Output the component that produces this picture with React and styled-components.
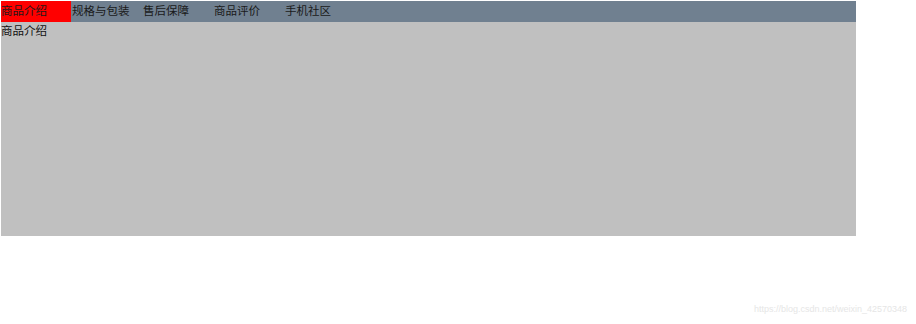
import React, { useState } from "react";
import styled, { createGlobalStyle } from "styled-components";

const GlobalStyle = createGlobalStyle`
  html, body {
    margin: 0;
    padding: 0;
    background: #fff;
  }
  body {
    padding: 1px 0 0 1px;
    font-family: "Liberation Sans", "Noto Sans CJK SC", sans-serif;
    font-size: 12px;
    color: #111;
  }
`;

const Page = styled.div`
  position: relative;
  width: 915px;
  height: 323px;
`;

const Box = styled.div`
  width: 855px;
`;

const TabBar = styled.ul`
  display: flex;
  margin: 0;
  padding: 0;
  list-style: none;
  height: 21px;
  background: #708090;
`;

const Tab = styled.li`
  width: ${(p) => (p.$first ? "70px" : "71px")};
  margin-right: ${(p) => (p.$first ? "1px" : "0")};
  height: 21px;
  line-height: 18px;
  font-family: "Noto Sans CJK SC", sans-serif;
  font-size: 11.5px;
  color: #1a1a1a;
  cursor: pointer;
  background: ${(p) => (p.$active ? "#ff0000" : "transparent")};
`;

const Panel = styled.div`
  height: 214px;
  background: #c0c0c0;
  font-family: "Noto Sans CJK SC", sans-serif;
  font-size: 11.5px;
  line-height: 17px;
  color: #111;
`;

const Watermark = styled.span`
  position: absolute;
  right: 9px;
  top: 303px;
  font-family: "Liberation Sans", sans-serif;
  font-size: 9px;
  color: #e6e6e6;
`;

const tabs = ["商品介绍", "规格与包装", "售后保障", "商品评价", "手机社区"];

const App = () => {
  const [active, setActive] = useState(0);

  return (
    <Page>
      <GlobalStyle />
      <Box>
        <TabBar>
          {tabs.map((name, i) => (
            <Tab
              key={name}
              $first={i === 0}
              $active={i === active}
              onMouseOver={() => setActive(i)}
            >
              {name}
            </Tab>
          ))}
        </TabBar>
        <Panel>{tabs[active]}</Panel>
      </Box>
      <Watermark>https://blog.csdn.net/weixin_42570348</Watermark>
    </Page>
  );
};

export default App;
